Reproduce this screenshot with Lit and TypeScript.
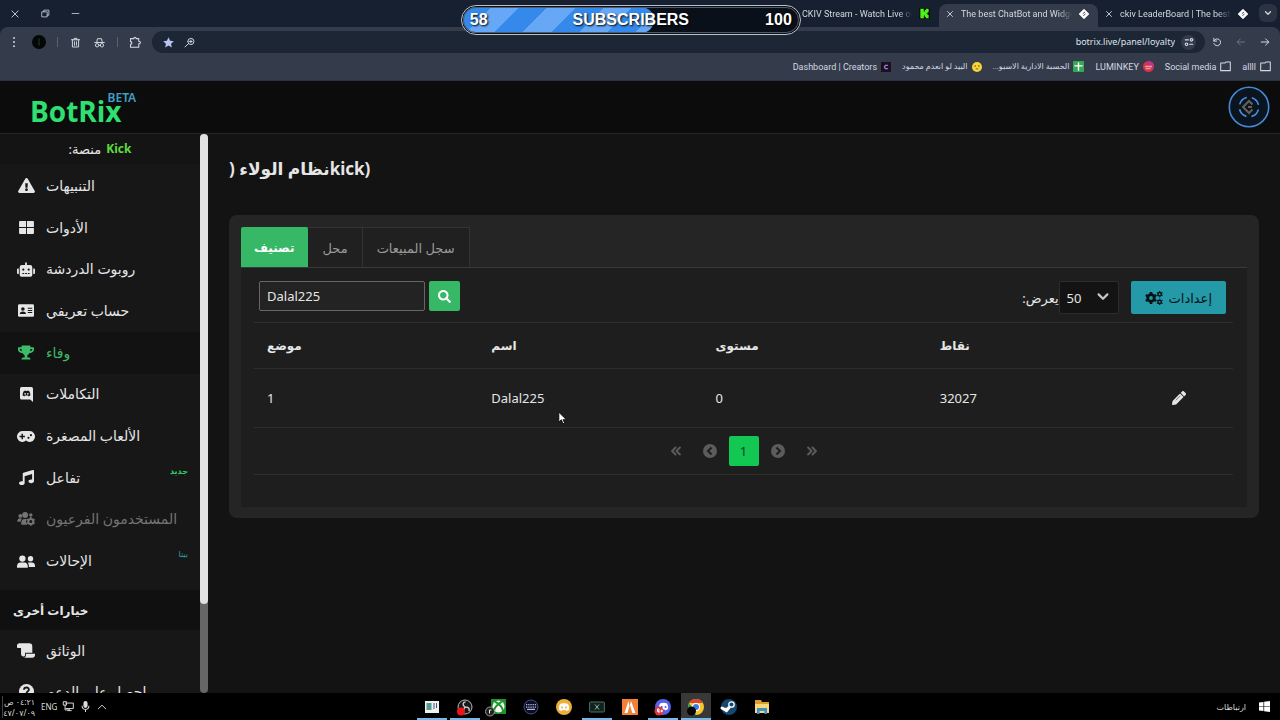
import { LitElement, html, css, svg, nothing } from "lit";
import { customElement } from "lit/decorators.js";
import { classMap } from "lit/directives/class-map.js";

const icon = (w: number, h: number, body: unknown, width = 16, height = 16) => html`
  <svg viewBox="0 0 ${w} ${h}" width=${width} height=${height} fill="currentColor" aria-hidden="true">${body}</svg>`;
const line = (d: string, size = 12, sw = 1.4) => html`
  <svg viewBox="0 0 16 16" width=${size} height=${size} fill="none" stroke="currentColor" stroke-width=${sw}
    stroke-linecap="round" stroke-linejoin="round" aria-hidden="true"><path d=${d}></path></svg>`;

const bg = "#171717";
const icons = {
  alert: icon(576, 512, svg`<path d="M569.517 440.013C587.975 472.007 564.806 512 527.94 512H48.054c-36.937 0-59.999-40.055-41.577-71.987L246.423 23.985c18.467-32.009 64.72-31.951 83.154 0l239.94 416.028zM288 354c-25.405 0-46 20.595-46 46s20.595 46 46 46 46-20.595 46-46-20.595-46-46-46zm-43.673-165.346l7.418 136c.347 6.364 5.609 11.346 11.982 11.346h48.546c6.373 0 11.635-4.982 11.982-11.346l7.418-136c.375-6.874-5.098-12.654-11.982-12.654h-63.383c-6.884 0-12.356 5.78-11.981 12.654z"/>`, 17, 15),
  widgets: icon(16, 14, svg`<path d="M1 0h6.500v6.500H0V1a1 1 0 0 1 1-1zM8.500 0H15a1 1 0 0 1 1 1v5.500H8.500zM0 7.500h7.500V14H1a1 1 0 0 1-1-1zM8.500 7.500H16V13a1 1 0 0 1-1 1H8.500z"/>`, 15, 13),
  robot: icon(640, 512, svg`<path d="M32,224H64V416H32A32,32,0,0,1,0,384V256A32,32,0,0,1,32,224Zm512-48V448a64,64,0,0,1-64,64H160a64,64,0,0,1-64-64V176a80,80,0,0,1,80-80H288V32a32,32,0,0,1,64,0V96H464A80,80,0,0,1,544,176ZM264,256a40,40,0,1,0-40,40A40,40,0,0,0,264,256Zm-8,128H192v32h64Zm96,0H288v32h64ZM456,256a40,40,0,1,0-40,40A40,40,0,0,0,456,256Zm-8,128H384v32h64ZM640,256V384a32,32,0,0,1-32,32H576V224h32A32,32,0,0,1,640,256Z"/>`, 18, 15),
  idCard: icon(18, 14, svg`<rect width="18" height="14" rx="1.500"/><g fill=${bg}><circle cx="5.500" cy="5.300" r="2"/><path d="M2 11c0-2 1.200-3 3.500-3S9 9 9 11zM11 4h5v1.100h-5zM11 6.400h5v1.100h-5zM11 8.800h5v1.100h-5z"/></g>`, 16, 13),
  trophy: icon(576, 512, svg`<path d="M552 64H448V24c0-13.300-10.700-24-24-24H152c-13.300 0-24 10.700-24 24v40H24C10.700 64 0 74.700 0 88v56c0 35.700 22.500 72.400 61.900 100.700 31.500 22.700 69.800 37.100 110 41.700C203.300 338.500 240 360 240 360v72h-48c-35.300 0-64 20.700-64 56v12c0 6.600 5.400 12 12 12h296c6.600 0 12-5.400 12-12v-12c0-35.300-28.700-56-64-56h-48v-72s36.700-21.500 68.100-73.600c40.300-4.600 78.600-19 110-41.700 39.300-28.300 61.900-65 61.900-100.700V88c0-13.300-10.700-24-24-24zM99.300 192.800C74.900 175.200 64 155.600 64 144v-16h64.200c1 32.600 5.800 61.200 12.800 86.200-15.100-5.200-29.200-12.400-41.700-21.400zM512 144c0 16.100-17.700 36.100-35.300 48.800-12.500 9-26.700 16.200-41.800 21.400 7-25 11.800-53.600 12.800-86.200H512v16z"/>`, 16, 15),
  discord: icon(14, 16, svg`<path d="M1.700 0h10.600A1.700 1.700 0 0 1 14 1.700V16l-3-2.500H1.700A1.700 1.700 0 0 1 0 11.800V1.700A1.700 1.700 0 0 1 1.700 0z"/><path fill=${bg} d="M4.200 4.200 6 3.700l.4.600h1.200l.4-.6 1.800.5c1 1.500 1.500 3 1.300 4.900l-1.900 1-.5-.9H5.300l-.5.900-1.900-1c-.2-1.900.3-3.400 1.300-4.900z"/><circle cx="5.500" cy="7.300" r=".9"/><circle cx="8.500" cy="7.300" r=".9"/>`, 13, 15),
  gamepad: icon(20, 12, svg`<path d="M6 0h8a6 6 0 1 1-4 10.500A6 6 0 1 1 6 0z"/><g fill=${bg}><path d="M5 3h1.600v2.200h2.200v1.600H6.600V9H5V6.800H2.800V5.200H5z"/><circle cx="12.800" cy="7.500" r="1.200"/><circle cx="15.500" cy="4.500" r="1.200"/></g>`, 18, 11),
  music: icon(512, 512, svg`<path d="M470.380 1.510L150.410 96A32 32 0 0 0 128 126.510v261.410A139 139 0 0 0 96 384c-53 0-96 28.660-96 64s43 64 96 64 96-28.660 96-64V214.320l256-75v184.610a138.400 138.400 0 0 0-32-3.930c-53 0-96 28.660-96 64s43 64 96 64 96-28.650 96-64V32a32 32 0 0 0-41.620-30.490z"/>`, 15, 15),
  usersCog: icon(20, 16, svg`<circle cx="3.500" cy="4.500" r="2.200"/><circle cx="9" cy="3.500" r="3.400"/><circle cx="15.500" cy="3.500" r="2"/><path d="M0 11c0-2.500 1-4 3.500-4 1 0 1.600.3 2 .7C4.500 8.500 4 9.500 4 11zM4.500 14c0-4 1-6 4-6H11l-1 3 1.500 3.500H5.500a1 1 0 0 1-1-.5z"/><circle cx="15.500" cy="10.800" r="2.900" fill="none" stroke="currentColor" stroke-width="2.300"/><path fill="none" stroke="currentColor" stroke-width="1.800" d="M15.500 5.800v1.700M15.500 14v1.800M11.200 8.300l1.500.9M18.300 12.400l1.500.9M11.200 13.300l1.500-.9M18.300 9.200l1.500-.9"/>`, 18, 14),
  users: icon(20, 14, svg`<circle cx="6" cy="3.700" r="3.500"/><circle cx="15" cy="4" r="3"/><path d="M0 12.500C0 9.500 1.500 8 4 8h4c2.500 0 4 1.500 4 4.500V14H0zM13.200 13H20v-1c0-2.500-1.200-4-3.500-4h-3c-.6 0-1 .1-1.500.3 1 1.200 1.300 2.700 1.200 4.700z"/>`, 18, 13),
  scroll: icon(20, 16, svg`<path d="M0 2.800A2.800 2.800 0 0 1 2.800 0h10.700A3.500 3.500 0 0 1 17 3.500V10.500H9V13c0 1-.5 1.600-1.300 1.600H7C5.500 14.600 4.500 13.500 4.500 12V5.200H1C.400 5.200 0 4.800 0 4.300z"/><path d="M10 11.700h10V13c0 1.700-1.300 3-3 3H7c2 0 3-1.200 3-3z"/>`, 18, 15),
  help: icon(16, 16, svg`<circle cx="8" cy="8" r="8"/><path fill="none" stroke=${bg} stroke-width="2" d="M5.300 6.200C5.500 3 10.500 3 10.500 6c0 1.800-2.300 1.800-2.400 3.700"/><circle cx="8" cy="12" r="1.200" fill=${bg}/>`, 15, 15),
  search: icon(512, 512, svg`<path d="M505 442.700L405.300 343c-4.500-4.500-10.600-7-17-7H372c27.600-35.300 44-79.700 44-128C416 93.100 322.900 0 208 0S0 93.100 0 208s93.100 208 208 208c48.300 0 92.700-16.400 128-44v16.300c0 6.400 2.500 12.500 7 17l99.700 99.700c9.400 9.400 24.600 9.400 33.900 0l28.300-28.300c9.400-9.400 9.400-24.600.1-34zM208 336c-70.700 0-128-57.200-128-128 0-70.700 57.200-128 128-128 70.700 0 128 57.200 128 128 0 70.700-57.200 128-128 128z"/>`, 13, 13),
  pencil: icon(512, 512, svg`<path d="M497.900 142.100l-46.100 46.100c-4.700 4.700-12.300 4.700-17 0l-111-111c-4.700-4.700-4.700-12.300 0-17l46.100-46.100c18.700-18.700 49.100-18.700 67.900 0l60.100 60.100c18.800 18.700 18.800 49.100 0 67.900zM284.200 99.800L21.600 362.400.4 483.900c-2.900 16.400 11.400 30.600 27.800 27.800l121.500-21.300 262.600-262.600c4.700-4.700 4.700-12.300 0-17l-111-111c-4.800-4.700-12.400-4.700-17.100 0z"/><path fill="none" stroke="#1e1e1e" stroke-width="20" d="M135 345 300 180"/>`, 14, 14),
  cogs: icon(18, 14, svg`<circle cx="6" cy="7" r="3.300" fill="none" stroke="currentColor" stroke-width="2.800"/><path fill="none" stroke="currentColor" stroke-width="2.600" d="M6 1v2M6 11v2M.800 4l1.700 1M9.500 9l1.700 1M.800 10l1.700-1M9.500 5l1.700-1"/><g fill="none" stroke="currentColor"><circle cx="14.700" cy="3.200" r="1.700" stroke-width="1.500"/><circle cx="14.700" cy="10.900" r="1.700" stroke-width="1.500"/><path stroke-width="1.100" d="M14.700 0v1M14.700 5.400v1M11.900 1.600l.9.500M16.600 4.300l.9.500M11.900 4.800l.9-.5M16.600 2.100l.9-.5M14.700 7.700v1M14.700 13.100v.900M11.900 9.300l.9.500M16.600 12l.9.500M11.900 12.500l.9-.5M16.600 9.800l.9-.5"/></g>`, 18, 14),
};

const menu = [
  { label: "التنبيهات", icon: icons.alert },
  { label: "الأدوات", icon: icons.widgets },
  { label: "روبوت الدردشة", icon: icons.robot },
  { label: "حساب تعريفي", icon: icons.idCard },
  { label: "وفاء", icon: icons.trophy, state: "active" },
  { label: "التكاملات", icon: icons.discord },
  { label: "الألعاب المصغرة", icon: icons.gamepad },
  { label: "تفاعل", icon: icons.music, tag: "جديد", tagClass: "new" },
  { label: "المستخدمون الفرعيون", icon: icons.usersCog, state: "off" },
  { label: "الإحالات", icon: icons.users, tag: "بيتا", tagClass: "beta" },
];
const more = [
  { label: "الوثائق", icon: icons.scroll },
  { label: "احصل على الدعم", icon: icons.help },
];

const diamond = svg`<path fill="#fff" d="M8 1 15 8 8 15 1 8z" stroke="#fff" stroke-width="2" stroke-linejoin="round"/><path d="M6 7.500 9.500 5M7 10.500 10.500 8" stroke="#293241" stroke-width="1.400"/>`;
const tabs = [
  { title: "CKIV Stream - Watch Live on Kick", fav: icon(16, 16, svg`<path fill="#0a0f0a" d="M0 0h16v16H0z"/><path fill="#4bf51b" d="M2 1h5v4h1.500V3H10V1h4v5h-1.500v1.500H11v1H12.500V10H14v5h-4v-2H8.500v-2H7v4H2z"/>`, 11, 11) },
  { title: "The best ChatBot and Widgets for", fav: icon(16, 16, diamond, 10, 10), active: true },
  { title: "ckiv LeaderBoard | The best ChatBot", fav: icon(16, 16, diamond, 10, 10) },
];
const folder = line("M1 3h6l1.500-1.500H15V14H1z", 11, 1.500);
const bookmarks = [
  { label: "Dashboard | Creators", icon: icon(16, 16, svg`<path fill="#1a1024" d="M0 0h16v16H0z"/><path fill="none" stroke="#a77bd0" stroke-width="2" d="M11 5.500H7L5.500 8 7 10.500h4"/>`, 10, 10) },
  { label: "البيد لو انعدم محمود", arabic: true, icon: icon(16, 16, svg`<circle cx="8" cy="8" r="8" fill="#f8d43a"/><circle cx="5" cy="6.500" r="1.200" fill="#5b4310"/><circle cx="11" cy="6.500" r="1.200" fill="#5b4310"/><path stroke="#5b4310" stroke-width="1.200" d="M6 11h4"/>`, 10, 10) },
  { label: "الحسبة الادارية الاسبو...", arabic: true, icon: icon(16, 16, svg`<rect width="16" height="16" rx="1" fill="#35a853"/><path stroke="#fff" stroke-width="2" d="M8 2v12M2 7h12"/>`, 11, 11) },
  { label: "LUMINKEY", icon: icon(16, 16, svg`<circle cx="8" cy="8" r="8" fill="#d9304f"/><path fill="#b2359e" d="M8 0a8 8 0 0 1 8 8l-8-2z"/><path stroke="#f0a0a5" stroke-width="2" d="M3 8h10M4 11h7"/>`, 11, 11) },
  { label: "Social media", icon: folder },
  { label: "allll", icon: folder },
];

const apps = [
  { name: "Editor", open: true, art: svg`<path fill="#eef3f2" d="M1 2h14v12H1z"/><path fill="#4f9b8d" d="M2.500 4h5v7h-5z"/><path stroke="#557" d="M9 5h2M9 7h2M9 9h2M12.500 4v5"/>` },
  { name: "OBS", open: true, art: svg`<circle cx="8" cy="8" r="7" fill="#181818" stroke="#b8b8b8"/><path fill="none" stroke="#c5c5c5" stroke-width="1.500" d="M8 8C5 6 6 3 8.500 3M8 8c3 0 5 1 4 4M8 8c-1 3-3 4-5 2"/><circle cx="4" cy="12.500" r="4" fill="#f01414"/>` },
  { name: "Xbox", open: false, art: svg`<path fill="#21912a" d="M1 0h15v15H1z"/><circle cx="8.500" cy="7.500" r="6" fill="#f2fff2"/><path fill="none" stroke="#21912a" stroke-width="2" d="M4 12.500c0-3 2-5.500 4.500-7.500C11 7 13 9.500 13 12.500M5 2.500 8.500 5 12 2.500"/><circle cx="0" cy="12.500" r="4.500" fill="#222" stroke="#999"/><path fill="none" stroke="#eee" d="M-.5 14.500v-3.500h2"/>` },
  { name: "Keyboard", open: false, art: svg`<circle cx="8" cy="8" r="7" fill="#0b0e24" stroke="#475080"/><path fill="#b6bad8" d="M3 5h1.300v1.300H3zM5.200 5h1.300v1.300H5.200zM7.400 5h1.300v1.300H7.400zM9.600 5h1.300v1.300H9.600zM11.800 5h1.300v1.300h-1.300zM3 7.400h1.300v1.300H3zM5.200 7.400h1.300v1.300H5.200zM7.400 7.400h1.300v1.300H7.400zM9.600 7.400h1.300v1.300H9.600zM11.800 7.400h1.300v1.300h-1.300zM4 9.800h8V11H4z"/>` },
  { name: "Discord", open: false, art: svg`<circle cx="8" cy="8" r="8" fill="#edae3a"/><path fill="#fff" d="M4 5c2-1 6-1 8 0 1 2 1.500 4 1 6l-2.500 1-1-1h-3l-1 1L3 11c-.5-2 0-4 1-6z"/><path stroke="#edae3a" stroke-width="2" d="M5.200 8.500h1.600M9.200 8.500h1.600"/>` },
  { name: "Console", open: true, art: svg`<rect x=".6" y="3" width="14.800" height="10" rx="1" fill="#12211f" stroke="#47736a"/><path stroke="#88b8aa" d="m6 5.500 4 5M10 5.500l-4 5"/>` },
  { name: "FiveM", open: false, art: svg`<path fill="#f08136" d="M0 0h16v16H0z"/><path fill="#fff" d="m6.500 2-4 12h3l2-7zM9 2l4.500 12h-3.200L8 6z"/>` },
  { name: "Discord PTB", open: true, art: svg`<circle cx="8" cy="8" r="8" fill="#5663e8"/><path fill="#fff" d="M5 4.500c2-1 5-1 7 0 1 2 1.500 4 1 5.500l-2.500 1.500-1-1h-3l-1 1L4 10c-.5-2 0-3.500 1-5.500z"/><path stroke="#5663e8" stroke-width="2" d="M6 8h1.500M9.800 8h1.500"/><circle cx="4" cy="12" r="4.500" fill="#e0363f"/><path fill="none" stroke="#fff" d="M4 12.500H2.500V10H4v4M5.500 12h2.500M6.700 10.700v2.600"/>` },
  { name: "Chrome", open: true, current: true, art: svg`<circle cx="8" cy="8" r="8" fill="#f7c52c"/><path fill="#dc4437" d="M1.100 4a8 8 0 0 1 13.800 0H8z"/><path fill="#249c55" d="M1.100 4 5 10l3 6A8 8 0 0 1 1.100 4z"/><circle cx="8" cy="8" r="4" fill="#fff"/><circle cx="8" cy="8" r="3" fill="#3b7de8"/><circle cx="3.500" cy="12" r="4.500" fill="#050505"/>` },
  { name: "Steam", open: false, art: svg`<circle cx="8" cy="8" r="8" fill="#17466f"/><circle cx="10.500" cy="5.500" r="2.700" fill="none" stroke="#fff" stroke-width="1.300"/><path stroke="#fff" stroke-width="3" stroke-linecap="round" d="m1 9 4.500 2.500L8 8.500"/>` },
  { name: "Explorer", open: false, art: svg`<path fill="#d99f2c" d="M1 1h6l1 2h7v11H1z"/><path fill="#f7d978" d="M1 5h14v9H1z"/><path fill="#3f8fc6" d="M3 9h10v6h-2.500v-3h-5v3H3z"/>` },
];

const fonts = css`"Noto Sans", "DejaVu Sans", sans-serif`;

@customElement("browser-chrome")
class BrowserChrome extends LitElement {
  static styles = css`
    :host { display: block; font: 9px/14px Roboto, "DejaVu Sans", sans-serif; color: #d3d8e0; background: #172030; }
    svg { display: block; flex: none; }
    button { all: unset; display: flex; align-items: center; justify-content: center; }
    .strip { display: flex; height: 27px; align-items: stretch; }
    .window { display: flex; }
    .window button { width: 30px; }
    .grow { flex: 1; min-width: 0; }
    .plus { width: 26px; }
    .tab { width: 159px; box-sizing: border-box; padding: 0 9px 4px 7px; display: flex; align-items: center; gap: 7px; margin-top: 4px; border-radius: 8px 8px 0 0; }
    .tab.active { background: #343c4c; }
    .title { flex: 1; min-width: 0; overflow: hidden; white-space: nowrap; mask-image: linear-gradient(90deg, #000 88%, transparent); }
    .list { width: 18px; height: 18px; margin: 4px 3px 0 2px; border-radius: 6px; background: #2b3342; }
    .bar { display: flex; align-items: center; box-sizing: border-box; height: 26px; padding: 4px 3px 0 0; background: #343c4c; border-radius: 8px 8px 0 0; }
    .tool { width: 24px; }
    .first { width: 28px; }
    .avatar { width: 14px; height: 14px; border-radius: 50%; background: #050707; color: #2c4a3c; margin: 0 5px 0 4px; }
    .sep { width: 1px; height: 10px; margin: 0 5px 0 6px; background: #596274; }
    .omni { flex: 1; display: flex; align-items: center; height: 22px; background: #1c2635; border-radius: 11px; padding: 0 9px 0 11px; gap: 10px; margin-left: 5px; }
    .star { color: #b9c4f5; }
    .url { all: unset; flex: 1; min-width: 0; text-align: right; color: #dfe3ea; font: 9px/14px ${fonts}; }
    .site { width: 15px; height: 15px; border-radius: 50%; background: #343c4c; margin-left: -4px; }
    .dim { color: #697183; }
    .marks { display: flex; justify-content: flex-end; gap: 11px; box-sizing: border-box; height: 28px; align-items: center; padding: 0 9px 0; background: #343c4c; border-bottom: 1px solid #29313f; }
    .marks a { display: flex; align-items: center; gap: 4px; color: inherit; text-decoration: none; white-space: nowrap; }
    .arabic { font-size: 8px; }
  `;
  render() {
    return html`
      <div class="strip">
        <div class="window">
          <button aria-label="Close">${line("M3 3l10 10M13 3 3 13", 10)}</button>
          <button aria-label="Restore">${line("M2 5h9v9H2zM5 5V2h9v9h-3", 9)}</button>
          <button aria-label="Minimize">${line("M2 8h12", 9)}</button>
        </div>
        <div class="grow"></div>
        <button class="plus" aria-label="New tab">${line("M8 2v12M2 8h12", 9)}</button>
        ${tabs.map((t) => html`
          <div class=${classMap({ tab: true, active: !!t.active })}>
            <button aria-label="Close tab">${line("M3 3l10 10M13 3 3 13", 8, 1.800)}</button>
            <span class="title">${t.title}</span>${t.fav}
          </div>`)}
        <button class="list" aria-label="Search tabs">${line("M4 6l4 4 4-4", 10, 2)}</button>
      </div>
      <div class="bar">
        <button class="first" aria-label="Menu">${icon(16, 16, svg`<circle cx="8" cy="2.500" r="1.300"/><circle cx="8" cy="8" r="1.300"/><circle cx="8" cy="13.500" r="1.300"/>`, 12, 12)}</button>
        <button class="avatar" aria-label="Profile">${line("M8 3v4M8 9v4", 10)}</button>
        <span class="sep"></span>
        <button class="tool" aria-label="Delete data">${line("M2 4h12M6 4V2h4v2M3.500 4v10.500h9V4M6.500 7v5M9.500 7v5", 11)}</button>
        <button class="tool" aria-label="Incognito">${line("M1 8h14M4 8l1-5.500h6L12 8M7 12h2M2 12a2.500 2.500 0 1 0 5 0 2.500 2.500 0 1 0-5 0M9 12a2.500 2.500 0 1 0 5 0 2.500 2.500 0 1 0-5 0", 11)}</button>
        <span class="sep"></span>
        <button class="tool" aria-label="Extensions">${line("M2 3.500h4.500C6.500 1 9.500 1 9.500 3.500H13V7c3 0 3 3.500 0 3.500V15H2v-4c2.500 0 2.500-3.500 0-3.500z")}</button>
        <div class="omni">
          <button class="star" aria-label="Bookmark">${icon(16, 16, svg`<path d="m8 .5 2.300 5 5.400.600-4 3.700 1.100 5.400L8 12.500l-4.800 2.700 1.100-5.400-4-3.700 5.400-.600z"/>`, 11, 11)}</button>
          <button aria-label="Zoom">${line("M5.500 6.500a4.500 4.500 0 1 0 9 0 4.500 4.500 0 1 0-9 0M6.500 9.500 1.500 14.500M10 4.500v4M8 6.500h4", 11)}</button>
          <input class="url" aria-label="Address" value="botrix.live/panel/loyalty" />
          <button class="site" aria-label="Site settings">${line("M2 4.500h5M10 4.500a2 2 0 1 0 4 0 2 2 0 1 0-4 0M9 11.500h5M2 11.500a2 2 0 1 0 4 0 2 2 0 1 0-4 0", 10, 1.800)}</button>
        </div>
        <button class="tool" aria-label="Reload">${line("M3 6.500a5.500 5.500 0 1 1 0 4M3 2v4.500h4.500", 10, 1.600)}</button>
        <button class="tool dim" aria-label="Forward">${line("M14 8H2M7 3 2 8l5 5", 10, 1.600)}</button>
        <button class="tool" aria-label="Back">${line("M2 8h12M9 3l5 5-5 5", 10, 1.600)}</button>
      </div>
      <div class="marks">${bookmarks.map((b) => html`<a href="#"><span class=${classMap({ arabic: !!b.arabic })} dir="auto">${b.label}</span>${b.icon}</a>`)}</div>`;
  }
}

@customElement("side-nav")
class SideNav extends LitElement {
  static styles = css`
    :host { display: flex; width: 208px; flex: none; overflow: hidden; font: 14px/20px ${fonts}; color: #e6e6e6; background: #171717; }
    .body { flex: 1; min-width: 0; overflow: hidden; }
    .platform { display: flex; justify-content: center; gap: 5px; height: 30px; align-items: center; font-size: 13px; background: #141414; }
    .kick { color: #5bdc3c; font-weight: 700; font-size: 12px; }
    ul { list-style: none; margin: 0; padding: 1px 0 0; display: grid; grid-auto-rows: 1fr; }
    .main { height: 417px; }
    .more { padding: 0; }
    a { height: 100%; min-height: 41px; box-sizing: border-box; display: flex; align-items: center; gap: 10px; padding: 0 12px 0 16px; color: inherit; text-decoration: none; white-space: nowrap; }
    .icon { width: 20px; display: flex; justify-content: center; flex: none; }
    .text { flex: 1; }
    .active { color: #3dbb68; background: #121212; }
    .off { color: #747474; }
    .tag { font-size: 8px; line-height: 10px; padding-bottom: 14px; }
    .new { color: #2fd563; font-weight: 700; }
    .beta { color: #2c9bad; }
    h2 { margin: 8px 0 0; padding: 2px 13px 0; font-size: 12px; line-height: 38px; background: #101010; }
    .track { width: 8px; background: #666; border-radius: 4px; }
    .thumb { height: 84%; background: #e1e1e1; border-radius: 4px; }
  `;
  item(m: any) {
    return html`<li><a href="#" class=${m.state ?? ""}><span class="icon">${m.icon}</span><span class="text"><bdi>${m.label}</bdi></span>${m.tag ? html`<span class="tag ${m.tagClass}">${m.tag}</span>` : nothing}</a></li>`;
  }
  render() {
    return html`
      <nav class="body">
        <div class="platform"><span dir="rtl">منصة:</span><span class="kick">Kick</span></div>
        <ul class="main">${menu.map(this.item)}</ul>
        <h2>خيارات أخرى</h2>
        <ul class="more">${more.map(this.item)}</ul>
      </nav>
      <div class="track"><div class="thumb"></div></div>`;
  }
}

@customElement("loyalty-panel")
class LoyaltyPanel extends LitElement {
  static styles = css`
    :host { display: block; flex: 1; min-width: 0; padding: 20px 21px 0; font: 13px/20px ${fonts}; color: #e6e6e6; background: #131313; }
    svg { display: block; }
    button { all: unset; display: flex; align-items: center; justify-content: center; }
    h1 { margin: 0 0 31px; font-size: 17px; line-height: 30px; }
    .card { background: #252525; border-radius: 8px; padding: 12px 12px 11px; }
    .tabs { display: flex; }
    .tabs button { height: 40px; padding: 0 14px; box-sizing: border-box; color: #9a9a9a; background: #202020; border: 1px solid #333; border-bottom: 0; border-left: 0; }
    .tabs .on { padding: 0 13px; font-size: 12px; color: #fff; font-weight: 700; background: #36b866; border-color: #36b866; border-radius: 2px 2px 0 0; }
    .pane { background: #1e1e1e; border-top: 1px solid #393939; padding: 0 14px 32px 13px; }
    .row { display: flex; align-items: center; padding: 13px 7px 8px 5px; height: 33px; }
    .query { box-sizing: border-box; width: 166px; height: 30px; margin-right: 4px; padding: 0 7px; font: 13px/20px ${fonts}; color: #e6e6e6; background: #232323; border: 1px solid #6b6464; border-radius: 2px; }
    .go { width: 31px; height: 30px; background: #36b866; color: #fff; border-radius: 2px; }
    .query, .go { align-self: flex-start; }
    .show { margin-left: auto; }
    .pick { position: relative; margin-right: 12px; }
    select { appearance: none; display: block; box-sizing: border-box; width: 60px; height: 33px; padding: 0 7px; font: 13px/20px ${fonts}; color: #e6e6e6; background: #131313; border: 1px solid #2c2c2c; border-radius: 2px; }
    .pick svg { position: absolute; right: 9px; top: 9px; color: #c6c6c6; pointer-events: none; }
    .settings { height: 33px; padding: 0 14px; gap: 6px; background: #2499a8; color: #061316; border-radius: 2px; }
    table { width: 100%; border-collapse: collapse; table-layout: fixed; text-align: left; }
    th, td { padding: 0 13px; border-top: 1px solid #2e2e2e; }
    th { height: 45px; font-size: 12px; }
    th:last-child { width: 56px; }
    td { height: 58px; }
    .edit { margin-left: 8px; }
    .pages { display: flex; justify-content: center; align-items: center; gap: 4px; height: 46px; border: solid #2e2e2e; border-width: 1px 0; color: #5c5c5c; }
    .pages button { width: 30px; height: 30px; border-radius: 2px; }
    .pages .now { background: #12c853; color: #10451f; }
  `;
  render() {
    const circle = (d: string) => icon(14, 14, svg`<circle cx="7" cy="7" r="7"/><path d=${d} fill="none" stroke="#1e1e1e" stroke-width="2"/>`, 14, 14);
    return html`
      <h1>) نظام الولاءkick)</h1>
      <section class="card">
        <div class="tabs" role="tablist">
          <button role="tab" class="on">تصنيف</button><button role="tab">محل</button><button role="tab">سجل المبيعات</button>
        </div>
        <div class="pane">
          <div class="row">
            <input class="query" aria-label="اسم" value="Dalal225" />
            <button class="go" aria-label="بحث">${icons.search}</button>
            <label class="show" for="count" dir="rtl">يعرض:</label>
            <div class="pick"><select id="count"><option>50</option></select>${line("M3 5l5 5 5-5", 14, 2.600)}</div>
            <button class="settings">${icons.cogs}<span>إعدادات</span></button>
          </div>
          <table>
            <thead><tr><th>موضع</th><th>اسم</th><th>مستوى</th><th>نقاط</th><th></th></tr></thead>
            <tbody><tr><td>1</td><td>Dalal225</td><td>0</td><td>32027</td><td><button class="edit" aria-label="تعديل">${icons.pencil}</button></td></tr></tbody>
          </table>
          <nav class="pages" aria-label="الصفحات">
            <button aria-label="First">${line("M7.500 4 3.500 8l4 4M12.500 4l-4 4 4 4", 14, 2.200)}</button>
            <button aria-label="Previous">${circle("M8.500 3.500 5 7l3.500 3.500")}</button>
            <button class="now">1</button>
            <button aria-label="Next">${circle("M5.500 3.500 9 7l-3.500 3.500")}</button>
            <button aria-label="Last">${line("M3.500 4l4 4-4 4M8.500 4l4 4-4 4", 14, 2.200)}</button>
          </nav>
        </div>
      </section>`;
  }
}

@customElement("task-bar")
class TaskBar extends LitElement {
  static styles = css`
    :host { display: grid; grid-template-columns: 1fr auto 1fr; align-items: center; height: 27px; flex: none; background: #000; color: #dcdcdc; font: 8px/11px ${fonts}; }
    svg { display: block; overflow: visible; }
    button { all: unset; display: flex; align-items: center; justify-content: center; }
    .left { display: flex; align-items: center; gap: 6px; }
    .clock { width: 32px; border-left: 1px solid #444; margin-left: 2px; white-space: nowrap; overflow: hidden; }
    .apps { display: flex; gap: 3px; padding-right: 86px; }
    .apps button { width: 30px; height: 23px; border: solid transparent; border-width: 2px 0; }
    .apps .open { border-bottom-color: #76b9ed; }
    .apps .current { background: #383838; border-top-color: #383838; }
    .right { display: flex; justify-content: flex-end; align-items: center; gap: 13px; padding-right: 10px; }
  `;
  render() {
    return html`
      <div class="left">
        <div class="clock" dir="rtl">٠٤:٢١ ص<br />٤٧/٠٧/٠٩</div>
        <span>ENG</span>
        ${line("M4 3h11v8H4M1 1h4v5H1zM3 6v7h5M9 11v3M7 14h5", 11)}
        ${icon(16, 16, svg`<rect x="5" y="0" width="6" height="10" rx="3"/><path d="M3 7c0 7 10 7 10 0M8 12v4" fill="none" stroke="currentColor" stroke-width="1.500"/>`, 11, 11)}
        ${line("M2 11l6-6 6 6", 10, 1.500)}
      </div>
      <div class="apps">${apps.map((a) => html`<button class=${classMap({ open: a.open, current: !!a.current })} aria-label=${a.name}>${icon(16, 16, a.art, 16, 16)}</button>`)}</div>
      <div class="right"><span>ارتباطات</span>
        <button aria-label="Start">${icon(16, 16, svg`<path fill="#fff" d="m0 2.300 6.500-.9v6.100H0zM7.500 1.200 16 0v7.500H7.500zM0 8.500h6.500v6.100L0 13.700zM7.500 8.500H16V16l-8.500-1.200z"/>`, 11, 11)}</button>
      </div>`;
  }
}

@customElement("app-root")
class AppRoot extends LitElement {
  static styles = css`
    :host { display: flex; flex-direction: column; height: 100vh; position: relative; overflow: hidden; background: #131313; font: 13px/20px ${fonts}; }
    header { display: flex; align-items: center; justify-content: space-between; height: 53px; flex: none; box-sizing: border-box; padding: 0 10px 0 30px; background: #0c0c0c; border-bottom: 1px solid #262626; }
    .brand { display: flex; text-decoration: none; color: #2fe070; font: 700 28px/36px "Open Sans", sans-serif; padding-top: 8px; }
    sup { margin: -3px 0 0 -14px; font: 600 12px/16px ${fonts}; color: #3fa0c8; }
    .user { all: unset; }
    .user svg { display: block; }
    .content { flex: 1; min-height: 0; display: flex; overflow: hidden; }
    .goal { position: absolute; left: 36%; top: 5px; width: 336px; height: 26px; border: 1px solid #bcc2ca; outline: 1px solid #515a67; outline-offset: -3px; border-radius: 16px; padding: 1px; overflow: hidden; background: #0a1019; color: #fff; font: 700 16px/26px "Liberation Sans", sans-serif; text-shadow: 1px 1px 2px #000; }
    .fill { height: 100%; border-radius: 14px; background: repeating-linear-gradient(135deg, #3589ea 0 20px, #66a7f6 20px 40px); }
    .figures { position: absolute; inset: 1px 8px; display: grid; grid-template-columns: 1fr auto 1fr; }
    .target { text-align: right; }
    .cursor { position: absolute; left: 558px; top: 411px; }
  `;
  render() {
    const progress = 57;
    return html`
      <browser-chrome></browser-chrome>
      <header>
        <a class="brand" href="#">BotRix<sup>BETA</sup></a>
        <button class="user" aria-label="Account">
          <svg viewBox="0 0 42 42" width="42" height="42" fill="none">
            <circle cx="21" cy="21" r="19.700" fill="#0b1520" stroke="#4687d6" stroke-width="1.600" />
            <circle cx="21" cy="21" r="9.700" stroke="#4c8fdc" stroke-width="1.600" stroke-dasharray="10.200 5.040" stroke-dashoffset="-2.500" />
            <path d="m24.500 18.500-3.500-3.500-6 6 6 6 3.500-3.500M20 21h4" stroke="#68605a" stroke-width="2" />
          </svg>
        </button>
      </header>
      <div class="content"><side-nav></side-nav><loyalty-panel></loyalty-panel></div>
      <task-bar></task-bar>
      <div class="goal"><div class="fill" style="width:${progress}%"></div>
        <div class="figures"><span>58</span><span>SUBSCRIBERS</span><span class="target">100</span></div></div>
      <svg class="cursor" viewBox="0 0 12 16" width="10" height="14" aria-hidden="true"><path d="M1 1v12l3-3 2 5 2-1-2-4h4z" fill="#fff" stroke="#000" /></svg>`;
  }
}
